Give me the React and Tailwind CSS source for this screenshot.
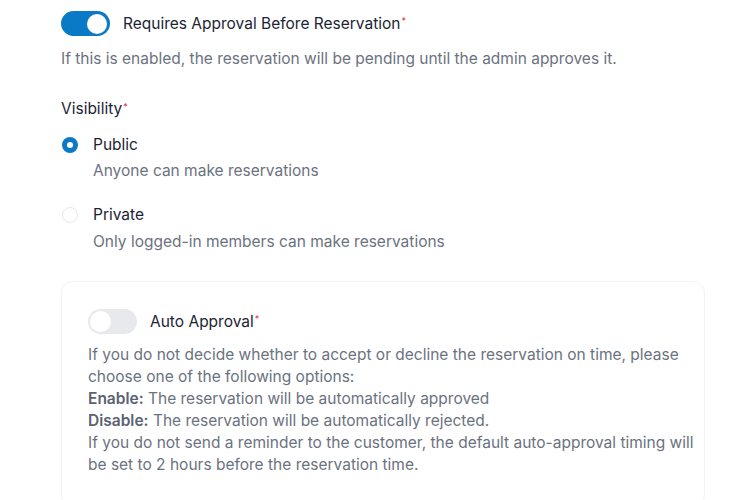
export default function App() {
  const font = { fontFamily: "Inter, 'Noto Sans', sans-serif" };
  return (
    <div className="w-[750px] h-[500px] bg-white overflow-hidden pl-[61px] pt-[11px] text-[15.5px]" style={font}>
      <div className="flex items-center gap-[13px]">
        <div className="w-[49px] h-[25px] rounded-full bg-[#0b7ac6] flex items-center justify-end pr-[3px]">
          <div className="w-[20px] h-[20px] rounded-full bg-white" />
        </div>
        <span className="text-[#1c2434] leading-[24px]">
          Requires Approval Before Reservation<sup className="text-[#e11d48] text-[9px] ml-[1px]">*</sup>
        </span>
      </div>
      <p className="text-[#6b7280] mt-[12px] leading-[22px]">
        If this is enabled, the reservation will be pending until the admin approves it.
      </p>

      <div className="mt-[28px] text-[#1c2434] leading-[22px]">
        Visibility<sup className="text-[#e11d48] text-[9px] ml-[1px]">*</sup>
      </div>

      <div className="mt-[14px] flex gap-[15px]">
        <div className="w-[16px] h-[16px] mt-[3px] rounded-full border-[5px] border-[#0b7ac6] bg-white ml-[1px]" />
        <div>
          <div className="text-[#1c2434] leading-[22px]">Public</div>
          <div className="text-[#6b7280] leading-[22px] mt-[4px]">Anyone can make reservations</div>
        </div>
      </div>

      <div className="mt-[22px] flex gap-[15px]">
        <div className="w-[16px] h-[16px] mt-[3px] rounded-full border border-[#e5e7eb] bg-white ml-[1px]" />
        <div>
          <div className="text-[#1c2434] leading-[22px]">Private</div>
          <div className="text-[#6b7280] leading-[22px] mt-[5px]">Only logged-in members can make reservations</div>
        </div>
      </div>

      <div className="mt-[28px] w-[644px] rounded-[12px] border border-[#f3f3f3] pl-[26px] pt-[27px] pb-[30px]">
        <div className="flex items-center gap-[13px]">
          <div className="w-[49px] h-[25px] rounded-full bg-[#e8e9ec] flex items-center pl-[2px]">
            <div className="w-[21px] h-[21px] rounded-full bg-white" />
          </div>
          <span className="text-[#1c2434] leading-[24px]">
            Auto Approval<sup className="text-[#e11d48] text-[9px] ml-[1px]">*</sup>
          </span>
        </div>
        <div className="text-[#6b7280] leading-[22px] mt-[10px] w-[612px]">
          <div>If you do not decide whether to accept or decline the reservation on time, please choose one of the following options:</div>
          <div><b className="font-semibold text-[#5b6270]">Enable:</b> The reservation will be automatically approved</div>
          <div><b className="font-semibold text-[#5b6270]">Disable:</b> The reservation will be automatically rejected.</div>
          <div>If you do not send a reminder to the customer, the default auto-approval timing will be set to 2 hours before the reservation time.</div>
        </div>
      </div>
    </div>
  );
}
